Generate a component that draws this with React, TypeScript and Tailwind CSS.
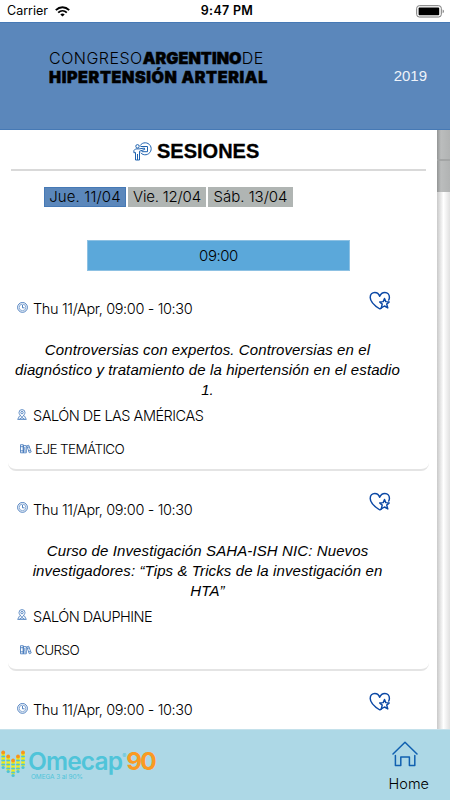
import React from "react";

const LIGHT = "font-['Inter','Liberation_Sans',sans-serif] font-light";

const HeartStar = () => (
  <svg className="h-[20px] w-[22px]" viewBox="0 0 22 20" fill="none" stroke="#0b48a5" strokeWidth="1.45" strokeLinejoin="round">
    <path d="M10.9 18C5.6 14.6 1.2 11 1.2 6.4C1.2 3.4 3.2 1.4 5.8 1.4C8.2 1.4 9.9 2.9 10.7 5.3C11.6 2.9 13.4 1.4 15.9 1.4C18.7 1.4 20.6 3.6 20.4 6.8C20.3 8 19.9 9 19.4 9.7M10.9 18L12.6 16.8" />
    <path d="M15.5 7.5L16.8 10.6L20.2 10.9L17.7 13.1L18.8 16.9L15.5 15L12.3 16.9L13.2 13.1L10.7 10.9L14.2 10.6Z" />
  </svg>
);

const Clock = () => (
  <svg className="h-[11px] w-[11px]" viewBox="0 0 11 11" fill="none" stroke="#3c73b9" strokeWidth="0.9">
    <circle cx="5.5" cy="5.4" r="4.9" />
    <circle cx="5.5" cy="5.4" r="3.3" strokeWidth="0.6" />
    <path d="M5.5 3V5.8H7.5" />
  </svg>
);

const Pin = () => (
  <svg className="h-[12px] w-[10px]" viewBox="0 0 10 12" fill="none" stroke="#3c73b9" strokeWidth="0.8">
    <path d="M5 8.4C3.5 6.6 2 5 2 3.6A3 3 0 0 1 8 3.6C8 5 6.5 6.6 5 8.4Z" />
    <circle cx="5" cy="3.6" r="1.2" />
    <path d="M2.7 6.7L0.7 10.4H9.3L7.3 6.7M2.4 10.2L5 8.6L7.6 10.2" />
  </svg>
);

const Books = () => (
  <svg className="h-[10px] w-[12px]" viewBox="0 0 12 10" fill="none" stroke="#3c73b9" strokeWidth="0.8">
    <path d="M0.5 0.7H3.3V8.8H0.5ZM3.3 1.6H6.3V8.8H3.3ZM0.5 2.7H3.3M0.5 6.8H3.3M4.8 3V6M3.3 7H6.3" />
    <path d="M6.8 1.9L8.7 1.2L11.2 8L9.3 8.7ZM7.4 3.5L9.3 2.8M8.6 7L10.5 6.3" />
  </svg>
);

const Speaker = () => (
  <svg className="h-[19px] w-[19px]" viewBox="0 0 19 19" fill="none" stroke="#1f62ae" strokeWidth="1">
    <path d="M7.2 3.6C8.4 1.6 10.2 0.8 12.3 0.8A6 6 0 1 1 7.7 10.8" />
    <path d="M7.5 4.5H14.5V9.7H8.6" />
    <circle cx="4.5" cy="4.3" r="1.7" />
    <path d="M2.5 18V10.5L0.9 10.8V8.6L2.6 6.9H6.1L11.4 6.1L11.7 7.5L6.5 9.2V18ZM4.5 12V18" />
  </svg>
);

const House = () => (
  <svg className="h-[26px] w-[26px]" viewBox="0 0 26 26" fill="none" stroke="#1060b0" strokeWidth="1.5" strokeLinejoin="round" strokeLinecap="round">
    <path d="M1 13L13 1.2L25 13" />
    <path d="M3.4 14.5V24.6H8.8V16H17.4V24.6H22.8V14.5" />
  </svg>
);

const Drops = () => {
  const columns = [
    { x: 3.2, y: 3.5 },
    { x: 8.2, y: 7.5 },
    { x: 13.1, y: 11.5 },
    { x: 18, y: 7.5 },
    { x: 23, y: 3.5 },
  ];
  return (
    <svg className="h-[30px] w-[27px] shrink-0" viewBox="0 0 27 30">
      {columns.map((c) => (
        <g key={c.x}>
          <rect x={c.x - 1.7} y={c.y} width="3.4" height="14" fill="#f8ee10" />
          {[4, 8, 12].map((d) => (
            <ellipse key={d} cx={c.x} cy={c.y + d} rx="2" ry="1" fill="#4fc4d4" />
          ))}
          <circle cx={c.x} cy={c.y} r="1.9" fill="#f7941d" />
          <circle cx={c.x} cy={c.y + 15} r="1.6" fill="#4fc4d4" />
        </g>
      ))}
    </svg>
  );
};

type Session = { lines: string[]; room: string; kind: string };

const sessions: Session[] = [
  {
    lines: ["Controversias con expertos. Controversias en el", "diagnóstico y tratamiento de la hipertensión en el estadio", "1."],
    room: "SALÓN DE LAS AMÉRICAS",
    kind: "EJE TEMÁTICO",
  },
  {
    lines: ["Curso de Investigación SAHA-ISH NIC: Nuevos", "investigadores: “Tips & Tricks de la investigación en", "HTA”"],
    room: "SALÓN DAUPHINE",
    kind: "CURSO",
  },
  { lines: [], room: "", kind: "" },
];

const Card = ({ s }: { s: Session }) => (
  <article className="mb-[7px] ml-2 h-[193.7px] w-[421px] shrink-0 rounded-lg border-b-2 border-[#e4e4e4] bg-white">
    <div className="flex h-[63px] justify-between pl-[9px] pr-[38px] pt-[14px]">
      <div className="flex items-center self-start pt-[8px]">
        <span className="-mt-[4px]"><Clock /></span>
        <span className={`${LIGHT} ml-[5px] whitespace-nowrap text-[14.5px] leading-[20px] tracking-[-0.36px]`}>Thu 11/Apr, 09:00 - 10:30</span>
      </div>
      <HeartStar />
    </div>
    {s.lines.length > 0 && (
      <>
        <div className="flex h-[60px] flex-col items-center whitespace-nowrap pr-[22px] font-['Liberation_Sans',sans-serif] text-[15px] italic leading-[20px] tracking-[0.11px]">
          {s.lines.map((l) => <span key={l}>{l}</span>)}
        </div>
        <div className="flex h-[32px] items-center pl-[9px]">
          <span className="-mt-[3px]"><Pin /></span>
          <span className={`${LIGHT} ml-[6px] text-[14.5px] leading-[20px] tracking-[-0.5px]`}>{s.room}</span>
        </div>
        <div className="flex h-[34px] items-center pl-[12px]">
          <Books />
          <span className={`${LIGHT} ml-[3px] text-[13.5px] leading-[20px] tracking-[-0.6px]`}>{s.kind}</span>
        </div>
      </>
    )}
  </article>
);

export default function App() {
  return (
    <div className="flex h-[800px] w-[450px] flex-col overflow-hidden bg-white text-black">
      <div className="grid h-[22px] shrink-0 grid-cols-3 items-center px-[7px] font-['Inter',sans-serif] text-[12.5px]">
        <div className="flex items-center gap-[7px] pt-px">
          <span>Carrier</span>
          <svg className="h-[11px] w-[15px]" viewBox="0 0 15 11" fill="none" stroke="#000" strokeWidth="1.9">
            <path d="M0.8 4.1C4.7 0.3 10.3 0.3 14.2 4.1M3.2 6.6C5.7 4.3 9.3 4.3 11.8 6.6" />
            <path d="M7.5 10.6L5.3 8.4C6.5 7.3 8.5 7.3 9.7 8.4Z" fill="#000" stroke="none" />
          </svg>
        </div>
        <span className="whitespace-nowrap pl-[4px] pt-px text-center font-semibold tracking-[0.3px]">9:47 PM</span>
        <svg className="mr-[-2px] h-[13px] w-[29px] justify-self-end" viewBox="0 0 29 13">
          <rect x="0.7" y="0.7" width="24.6" height="11.3" rx="2.6" fill="none" stroke="#777" />
          <rect x="2.6" y="2.6" width="20.6" height="7.7" rx="0.8" />
          <path d="M26.7 4.6C28.3 5 28.3 7.8 26.7 8.2Z" fill="#777" />
        </svg>
      </div>
      <header className="flex h-[108px] shrink-0 justify-between border-y border-[#4679b5] bg-[#5b87bb] pl-[49px] pr-[23px]">
        <div className="pt-[26px] font-['Inter',sans-serif] text-[16px] leading-[19px]">
          <div className="flex h-[19px] w-[218px] whitespace-nowrap font-light">
            <span className="tracking-[0.5px]">CONGRESO</span>
            <b className="font-black tracking-[0.1px] [-webkit-text-stroke:0.5px_black]">ARGENTINO</b>
            <span className="tracking-[0.5px]">DE</span>
          </div>
          <div className="whitespace-nowrap font-black tracking-[0.65px] [-webkit-text-stroke:0.5px_black]">HIPERTENSIÓN ARTERIAL</div>
        </div>
        <span className="pt-[43px] font-['Liberation_Sans',sans-serif] text-[15px] leading-[20px] text-[#eef3fa]">2019</span>
      </header>
      <div className="flex min-h-0 flex-1">
        <main className="flex w-[437px] shrink-0 flex-col overflow-hidden bg-white">
          <div className="mx-[11px] flex h-[41px] shrink-0 items-center border-b-2 border-[#d9d9d9] pl-[122px]">
            <span className="mt-[3px]"><Speaker /></span>
            <h1 className="ml-[5px] mt-[2px] font-['Liberation_Sans',sans-serif] text-[20px] font-bold leading-[24px] [-webkit-text-stroke:0.3px_black]">SESIONES</h1>
          </div>
          <div className={`${LIGHT} ml-[44px] mt-[16px] flex h-[20px] shrink-0 gap-[2px] whitespace-nowrap text-[15px] leading-[20px]`}>
            <span className="w-[82px] border border-[#4679b5] bg-[#5b87bb] text-center leading-[18px] tracking-[0.15px]">Jue. 11/04</span>
            <span className="w-[78px] bg-[#b0b5b3] text-center tracking-[-0.2px]">Vie. 12/04</span>
            <span className="w-[85px] bg-[#b0b5b3] text-center">Sáb. 13/04</span>
          </div>
          <div className={`${LIGHT} ml-[87px] mt-[33px] flex h-[31px] w-[263px] shrink-0 items-center justify-center border border-[#8dc1e3] bg-[#5ba8da] pt-[2px] text-[15px] tracking-[-0.45px]`}>09:00</div>
          <div className="flex min-h-0 flex-1 flex-col overflow-hidden pt-[6px]">
            {sessions.map((s, i) => <Card key={i} s={s} />)}
          </div>
        </main>
        <aside className="flex flex-1 flex-col">
          <div className="h-[31px] border-b-2 border-[#a3a5a5] bg-linear-to-r from-[#929494] via-[#bbbdbd] via-30% to-[#b1b3b3]" />
          <div className="h-[31px] bg-linear-to-r from-[#929494] via-[#bbbdbd] via-30% to-[#b1b3b3]" />
          <div className="flex-1 bg-linear-to-r from-[#c9c9c9] via-white via-50% to-[#e0e0e0]" />
        </aside>
      </div>
      <footer className="flex h-[71px] shrink-0 justify-between border-t border-[#c4e1eb] bg-[#add8e6] pr-[21px]">
        <div className="flex pt-[19px]">
          <Drops />
          <div className="ml-[1px] flex flex-col font-['Inter',sans-serif] text-[#4fc4d9]">
            <div className="flex h-[24px] items-center whitespace-nowrap text-[24.5px] font-semibold leading-[24px] tracking-[-0.85px]">
              <span>Omecap</span>
              <span className="mb-[11px] text-[6px] font-normal">®</span>
              <span className="ml-[1px] text-[24.5px] font-bold tracking-[-2px] text-[#fa9a22]">90</span>
            </div>
            <span className="ml-[3px] text-[6.5px] leading-[8px] tracking-[-0.1px]">OMEGA 3 al 90%</span>
          </div>
        </div>
        <div className="flex flex-col items-center pt-[11px]">
          <span className="mr-[7px]"><House /></span>
          <span className={`${LIGHT} mt-[7px] text-[14.5px] leading-[20px]`}>Home</span>
        </div>
      </footer>
    </div>
  );
}
